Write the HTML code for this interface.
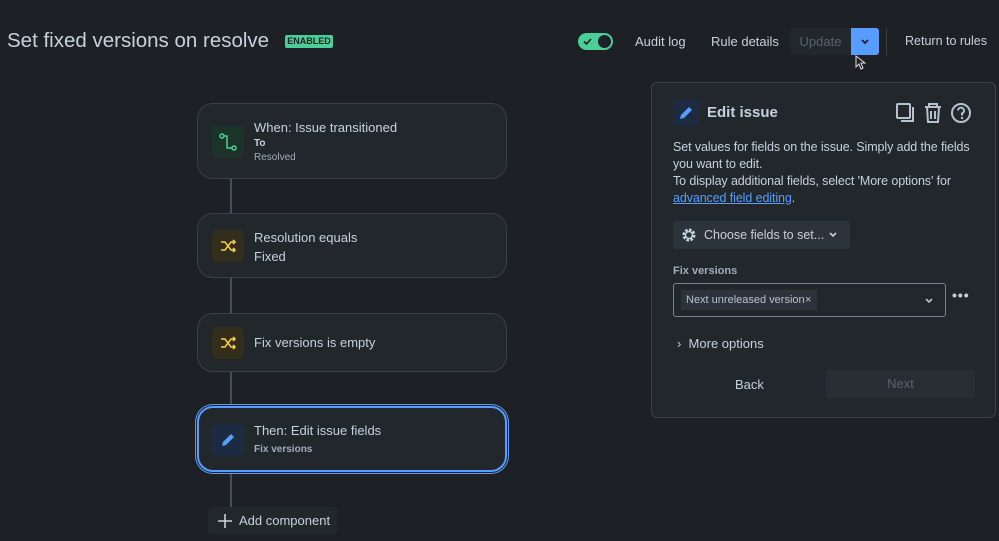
<!DOCTYPE html>
<html><head><style>
*{box-sizing:border-box;margin:0;padding:0}
body{width:999px;height:541px;background:#1d2125;font-family:"Liberation Sans","DejaVu Sans",sans-serif;color:#b6c2cf;position:relative;overflow:hidden}
.a{position:absolute;white-space:nowrap}
.card{position:absolute;left:197px;width:310px;background:#22272b;border:1px solid #3b4148;border-radius:16px}
.ic{position:absolute;left:14px;width:32px;height:32px;border-radius:5px}
.t{position:absolute;left:56px;font-size:13px;color:#c7d1db;white-space:nowrap}
p{font-size:12.5px;line-height:17px;color:#c7d1db;letter-spacing:-0.1px}
</style></head><body>
<div class="a" style="left:7px;top:29px;font-size:20.5px;color:#c7d1db">Set fixed versions on resolve</div>
<div class="a" style="left:285px;top:35px;width:48px;height:13px;background:#4bce97;border-radius:2px;color:#1d2125;font-size:9px;font-weight:bold;text-align:center;line-height:13px">ENABLED</div>
<div class="a" style="left:578px;top:33px;width:35px;height:17px;background:#4bce97;border-radius:9px"><div class="a" style="right:2px;top:2px;width:13px;height:13px;border-radius:50%;background:#1d2125"></div><svg class="a" style="left:5px;top:4px" width="10" height="9"><path d="M1 4.5l2.5 2.5L8 2" stroke="#1d2125" stroke-width="1.6" fill="none"/></svg></div>
<div class="a" style="left:635px;top:34px;font-size:13px;color:#c7d1db">Audit log</div>
<div class="a" style="left:711px;top:34px;font-size:13px;color:#c7d1db">Rule details</div>
<div class="a" style="left:790px;top:28px;width:61px;height:27px;background:#22272b;border-radius:3px 0 0 3px;font-size:13px;color:#5b636b;text-align:center;line-height:27px">Update</div>
<div class="a" style="left:851px;top:28px;width:28px;height:27px;background:#579dff;border-radius:0 3px 3px 0"><svg width="28" height="27"><path d="M11 12l3 3 3-3" stroke="#1d2125" stroke-width="1.8" fill="none"/></svg></div>
<div class="a" style="left:886px;top:28px;width:1px;height:27px;background:#3b4148"></div>
<div class="a" style="left:905px;top:34px;font-size:12.5px;color:#c7d1db">Return to rules</div>
<svg class="a" style="left:855px;top:55px" width="12" height="16"><path d="M1 1v11l3-3 2 5 2-1-2-5h4z" fill="#1d2125" stroke="#ddd" stroke-width="1"/></svg>

<div class="a" style="left:230px;top:179px;width:2px;height:328px;background:#454f59"></div>
<div class="card" style="top:103px;height:76px"><div class="ic" style="top:22px;background:#1c3329"><svg width="32" height="32"><circle cx="10" cy="10" r="2" stroke="#4bce97" fill="none" stroke-width="1.5"/><circle cx="22" cy="22" r="2" stroke="#4bce97" fill="none" stroke-width="1.5"/><path d="M12 10h3v12h5" stroke="#4bce97" fill="none" stroke-width="1.5"/></svg></div>
<div class="t" style="top:16px">When: Issue transitioned</div><div class="t" style="top:34px;font-size:10px;font-weight:bold">To</div><div class="t" style="top:48px;font-size:10px;color:#9fadbc">Resolved</div></div>
<div class="card" style="top:213px;height:65px"><div class="ic" style="top:16px;background:#332e1b"><svg width="32" height="32"><path d="M9 12h4l6 8h4M9 20h4l6-8h4M21 10l2 2-2 2M21 18l2 2-2 2" stroke="#f5cd47" fill="none" stroke-width="1.6"/></svg></div>
<div class="t" style="top:16px">Resolution equals</div><div class="t" style="top:35px">Fixed</div></div>
<div class="card" style="top:313px;height:59px"><div class="ic" style="top:13px;background:#332e1b"><svg width="32" height="32"><path d="M9 12h4l6 8h4M9 20h4l6-8h4M21 10l2 2-2 2M21 18l2 2-2 2" stroke="#f5cd47" fill="none" stroke-width="1.6"/></svg></div>
<div class="t" style="top:21px">Fix versions is empty</div></div>
<div class="card" style="top:406px;height:66px;border:2px solid #579dff;box-shadow:0 0 0 1px #1d2125,0 0 0 2px #579dff"><div class="ic" style="top:16px;left:13px;background:#1c2b41"><svg width="32" height="32"><path d="M10 22l1-4 8-8 3 3-8 8z" fill="#579dff"/></svg></div>
<div class="t" style="top:15px;left:55px">Then: Edit issue fields</div><div class="t" style="top:36px;left:55px;font-size:10px;font-weight:bold;color:#9fadbc">Fix versions</div></div>
<div class="a" style="left:208px;top:507px;width:129px;height:27px;background:#22272b;border-radius:3px;font-size:13px;color:#c7d1db;line-height:27px;padding-left:31px">Add component<svg class="a" style="left:9px;top:6px" width="16" height="16"><path d="M8 1v14M1 8h14" stroke="#c7d1db" stroke-width="1.6"/></svg></div>

<div class="a" style="left:651px;top:82px;width:345px;height:336px;background:#22272b;border:1px solid #3b4148;border-radius:6px">
<div class="a" style="left:21px;top:16px;width:27px;height:27px;border-radius:4px;background:#1c2b41"><svg width="27" height="27"><path d="M7 20l1-4 8-8 3 3-8 8z" fill="#579dff"/></svg></div>
<div class="a" style="left:55px;top:21px;font-size:15px;font-weight:bold;color:#c7d1db">Edit issue</div>
<svg class="a" style="left:242px;top:18px" width="80" height="24"><rect x="3" y="3" width="13" height="14" rx="1" stroke="#b6c2cf" fill="none" stroke-width="2"/><path d="M7 20h12V6" stroke="#b6c2cf" fill="none" stroke-width="2"/><path d="M31 6h16M35 6V3h8v3M33 6l1 15h10l1-15M37 10v8M41 10v8" stroke="#b6c2cf" fill="none" stroke-width="2"/><circle cx="67" cy="12" r="9" stroke="#b6c2cf" fill="none" stroke-width="2"/><path d="M64 9.5a3 3 0 1 1 4 3v2" stroke="#b6c2cf" fill="none" stroke-width="2"/><circle cx="68" cy="17" r="1.2" fill="#b6c2cf"/></svg>
<div class="a" style="left:21px;top:56px;width:320px;white-space:normal"><p>Set values for fields on the issue. Simply add the fields<br>you want to edit.<br>To display additional fields, select 'More options' for<br><span style="color:#579dff;text-decoration:underline">advanced field editing</span>.</p></div>
<div class="a" style="left:21px;top:138px;width:177px;height:28px;background:#2c333a;border-radius:3px;font-size:12.5px;color:#c7d1db;line-height:28px;padding-left:31px">Choose fields to set...<svg class="a" style="left:8px;top:6px" width="16" height="16"><circle cx="8" cy="8" r="5" stroke="#c7d1db" stroke-width="3" stroke-dasharray="2.5 1.4" fill="none"/><circle cx="8" cy="8" r="3.5" stroke="#c7d1db" stroke-width="1.5" fill="none"/></svg><svg class="a" style="left:155px;top:10px" width="10" height="8"><path d="M2 2l3 3 3-3" stroke="#c7d1db" stroke-width="1.6" fill="none"/></svg></div>
<div class="a" style="left:21px;top:182px;font-size:11px;font-weight:bold;color:#9fadbc">Fix versions</div>
<div class="a" style="left:21px;top:200px;width:273px;height:34px;background:#22272b;border:1px solid #738496;border-radius:3px">
<div class="a" style="left:7px;top:6px;width:136px;height:20px;background:#2c333a;border-radius:2px;font-size:11px;color:#b6c2cf;line-height:20px;padding-left:5px">Next unreleased version<span style="position:absolute;left:124px">×</span></div>
<svg class="a" style="left:250px;top:13px" width="10" height="8"><path d="M2 2l3 3 3-3" stroke="#b6c2cf" stroke-width="1.6" fill="none"/></svg></div>
<div class="a" style="left:300px;top:204px;font-size:14px;color:#c7d1db;letter-spacing:1px;font-weight:bold">•••</div>
<div class="a" style="left:25px;top:253px;font-size:13px;color:#c7d1db">›&nbsp;&nbsp;More options</div>
<div class="a" style="left:83px;top:294px;font-size:13px;color:#c7d1db">Back</div>
<div class="a" style="left:174px;top:287px;width:149px;height:28px;background:#282e33;border-radius:3px;font-size:13px;color:#5b636b;text-align:center;line-height:28px">Next</div>
</div>
</body></html>
